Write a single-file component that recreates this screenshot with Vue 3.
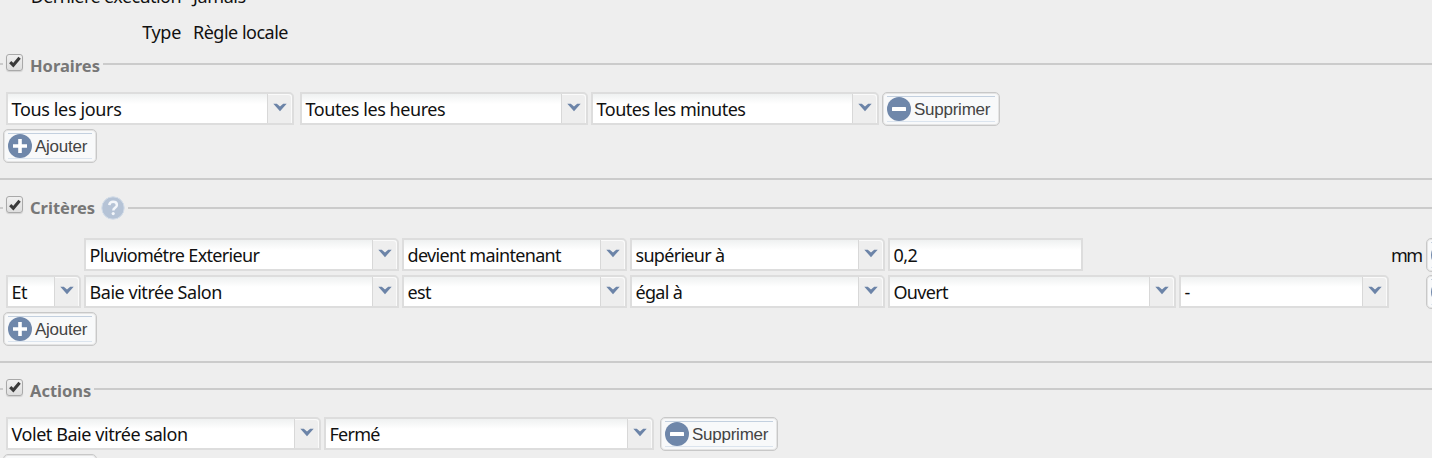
<script setup>
import { reactive } from 'vue'

// ls: interlettrage en px
const details = [
    { label: 'Dernière exécution', labelLs: -0.57, value: 'Jamais', ls: -0.4 },
    { label: 'Type', labelLs: -0.3, value: 'Règle locale', ls: -0.5 },
]

// w: largeur du champ, gap: espace avant le champ
const sections = reactive([
    {
        key: 'horaires',
        title: 'Horaires',
        checked: true,
        rows: [
            [
                { type: 'combo', value: 'Tous les jours', ls: -0.35, w: 288, gap: 6 },
                { type: 'combo', value: 'Toutes les heures', ls: -0.43, w: 288, gap: 6 },
                { type: 'combo', value: 'Toutes les minutes', ls: -0.49, w: 288, gap: 3 },
                { type: 'remove', w: 118, gap: 3 },
            ],
        ],
    },
    {
        key: 'criteres',
        title: 'Critères',
        checked: true,
        help: true,
        rows: [
            [
                { type: 'combo', value: 'Pluviométre Exterieur', ls: -0.66, w: 315, gap: 84 },
                { type: 'combo', value: 'devient maintenant', ls: -0.66, w: 225, gap: 3 },
                { type: 'combo', value: 'supérieur à', ls: -0.7, w: 255, gap: 3 },
                { type: 'text', value: '0,2', ls: -0.5, w: 195, gap: 3 },
                { type: 'unit', value: 'mm', ls: -1.5, w: 31, gap: 308 },
                { type: 'remove', w: 118, gap: 4 },
            ],
            [
                { type: 'combo', value: 'Et', ls: -0.4, w: 75, gap: 6 },
                { type: 'combo', value: 'Baie vitrée Salon', ls: -0.46, w: 315, gap: 3 },
                { type: 'combo', value: 'est', ls: -0.6, w: 225, gap: 3 },
                { type: 'combo', value: 'égal à', ls: -0.7, w: 255, gap: 3 },
                { type: 'combo', value: 'Ouvert', ls: -0.7, w: 288, gap: 3 },
                { type: 'combo', value: '-', ls: 0, w: 210, gap: 3 },
                { type: 'remove', w: 118, gap: 37 },
            ],
        ],
    },
    {
        key: 'actions',
        title: 'Actions',
        checked: true,
        rows: [
            [
                { type: 'combo', value: 'Volet Baie vitrée salon', ls: -0.44, w: 315, gap: 6 },
                { type: 'combo', value: 'Fermé', ls: -0.75, w: 330, gap: 3 },
                { type: 'remove', w: 118, gap: 6 },
            ],
        ],
    },
])
</script>

<template>
    <div class="rule">
        <!-- ── Détails ──────────────────────────────────────────────── -->
        <div class="details">
            <div v-for="d in details" :key="d.label" class="details__row">
                <span class="details__label" :style="{ letterSpacing: d.labelLs + 'px' }">{{ d.label }}</span>
                <span :style="{ letterSpacing: d.ls + 'px' }">{{ d.value }}</span>
            </div>
        </div>

        <!-- ── Sections ─────────────────────────────────────────────── -->
        <section v-for="s in sections" :key="s.key" :class="['group', 'group--' + s.key]">
            <div class="legend">
                <button class="check" @click="s.checked = !s.checked">
                    <svg v-if="s.checked" viewBox="0 0 12 12" width="12" height="12">
                        <path d="M1.2 6.2 4.3 9.2 10.6 1.8" fill="none" stroke="#3a3a3a" stroke-width="3.1" />
                    </svg>
                </button>
                <span class="legend__title">{{ s.title }}</span>
                <svg v-if="s.help" class="legend__help" viewBox="0 0 24 24" width="24" height="24">
                    <circle cx="12" cy="12" r="11.2" fill="#b5c3d6" stroke="#d2dce8" />
                    <path d="M8.3 9.2c.2-2.2 1.7-3.4 3.8-3.4 2.2 0 3.8 1.2 3.8 3.1 0 2.9-3.6 2.9-3.6 5.6" fill="none" stroke="#f3f6fa" stroke-width="2.5" />
                    <circle cx="12.2" cy="17.6" r="1.6" fill="#f3f6fa" />
                </svg>
                <span class="legend__line"></span>
            </div>

            <div class="rows">
                <div v-for="(row, r) in s.rows" :key="r" class="row">
                    <div
                        v-for="(f, i) in row"
                        :key="i"
                        :class="['field', 'field--' + f.type]"
                        :style="{ width: f.w + 'px', marginLeft: f.gap + 'px' }"
                    >
                        <button v-if="f.type === 'remove'" class="btn">
                            <svg class="btn__icon" viewBox="0 0 24 24" width="24" height="24">
                                <circle cx="12" cy="12" r="12" fill="#6f87aa" />
                                <rect x="5" y="10" width="14" height="4" rx=".6" fill="#fff" />
                            </svg>
                            <span class="btn__label">Supprimer</span>
                        </button>
                        <template v-else>
                            <span class="field__value" :style="{ letterSpacing: f.ls + 'px' }">{{ f.value }}</span>
                            <span v-if="f.type === 'combo'" class="field__trigger">
                                <svg viewBox="0 0 14 9" width="14" height="9">
                                    <path d="M.3.7h3.5L7 3.6 10.2.7h3.5L7 8.2z" fill="#6c84a8" />
                                </svg>
                            </span>
                        </template>
                    </div>
                </div>
                <button class="btn btn--add">
                    <svg class="btn__icon" viewBox="0 0 24 24" width="24" height="24">
                        <circle cx="12" cy="12" r="12" fill="#6f87aa" />
                        <path d="M10.2 5h3.6v5.2H19v3.6h-5.2V19h-3.6v-5.2H5v-3.6h5.2z" fill="#fff" />
                    </svg>
                    <span class="btn__label">Ajouter</span>
                </button>
            </div>
        </section>
    </div>
</template>

<style>
body {
    margin: 0;
    background: #eeeeee;
}
</style>

<style scoped>
.rule {
    width: 100%;
    height: 458px;
    overflow: hidden;
    background: #eeeeee;
    color: #111;
    font-family: "Noto Sans", sans-serif;
    font-size: 18px;
}

/* ── Détails ──────────────────────────────────────────────────────────── */
.details {
    display: flex;
    flex-direction: column;
    justify-content: flex-end;
    height: 51px;
    overflow: hidden;
}

.details__row {
    display: flex;
    flex-shrink: 0;
    gap: 12px;
    height: 36px;
    line-height: 35px;
}

.details__label {
    width: 181px;
    text-align: right;
}

/* ── Sections ─────────────────────────────────────────────────────────── */
.group {
    box-sizing: border-box;
    border-bottom: 2px solid #cbcbcb;
    margin-bottom: 15px;
}

.group--horaires {
    height: 129px;
}

.group--criteres {
    height: 168px;
    margin-bottom: 13px;
}

.legend {
    display: flex;
    align-items: center;
    height: 26px;
}

.legend::before {
    content: "";
    width: 3px;
    height: 2px;
    margin-right: 3px;
    background: #cbcbcb;
}

.check {
    display: flex;
    align-items: center;
    justify-content: center;
    box-sizing: border-box;
    width: 17px;
    height: 17px;
    margin: 0 7px 4px 0;
    padding: 0;
    border: 1px solid #a9a9a9;
    border-radius: 3px;
    background: linear-gradient(#f0f0f0, #dedede);
    box-shadow: 0 1px 1px rgba(0, 0, 0, 0.12);
}

.legend__title {
    color: #777;
    font-size: 16.5px;
    font-weight: 700;
    line-height: 26px;
    padding-top: 4px;
}

.group--criteres .check {
    margin-bottom: 7px;
}

.group--criteres .legend__title {
    padding-top: 0;
}

.legend__help {
    margin-left: 6px;
}

.legend__line {
    flex: 1;
    height: 2px;
    margin-left: 3px;
    background: #cbcbcb;
}

.rows {
    display: flex;
    flex-direction: column;
    align-items: flex-start;
    gap: 4px;
    padding-top: 15px;
}

.group--criteres .rows {
    padding-top: 17px;
}

.row {
    display: flex;
    height: 33px;
}

/* ── Champs ───────────────────────────────────────────────────────────── */
.field {
    display: flex;
    flex-shrink: 0;
    box-sizing: border-box;
    height: 33px;
    line-height: 30px;
    white-space: nowrap;
}

.field--combo,
.field--text {
    border: 2px solid #dddddd;
    background: linear-gradient(#eff1f1, #fff 10px);
}

.field--combo {
    border-top-right-radius: 5px;
}

.field--unit {
    line-height: 34px;
}

.field__value {
    flex: 1;
    padding-left: 3.5px;
}

.field--unit .field__value {
    padding-left: 0;
}

.field__trigger {
    display: flex;
    justify-content: center;
    box-sizing: border-box;
    width: 24px;
    padding-top: 8px;
    border: 1px solid #fafafa;
    border-width: 1px 1px 0 0;
    border-top-right-radius: 4px;
    background: #eeeeee;
    box-shadow: -1px 0 0 #d8d8d8;
}

/* ── Boutons ──────────────────────────────────────────────────────────── */
.btn {
    display: flex;
    flex-shrink: 0;
    align-items: center;
    box-sizing: border-box;
    width: 118px;
    height: 34px;
    padding: 0 4px;
    border: 1px solid #c8c8c8;
    border-radius: 5px;
    background: #f8f9fa;
    box-shadow: inset 0 0 0 1px #e4e4e4;
    color: #444;
    font-family: "Liberation Sans", Arial, sans-serif;
    font-size: 17px;
}

.btn--add {
    width: 94px;
    margin-left: 3px;
}

.btn__icon {
    position: relative;
    flex-shrink: 0;
    margin-right: -24px;
}

.btn__label {
    flex: 1;
    height: 24px;
    padding-left: 27px;
    border-top: 1px solid #c3d0df;
    border-bottom: 1px solid #dbe4ee;
    line-height: 25px;
    letter-spacing: -0.25px;
    text-align: left;
}
</style>
